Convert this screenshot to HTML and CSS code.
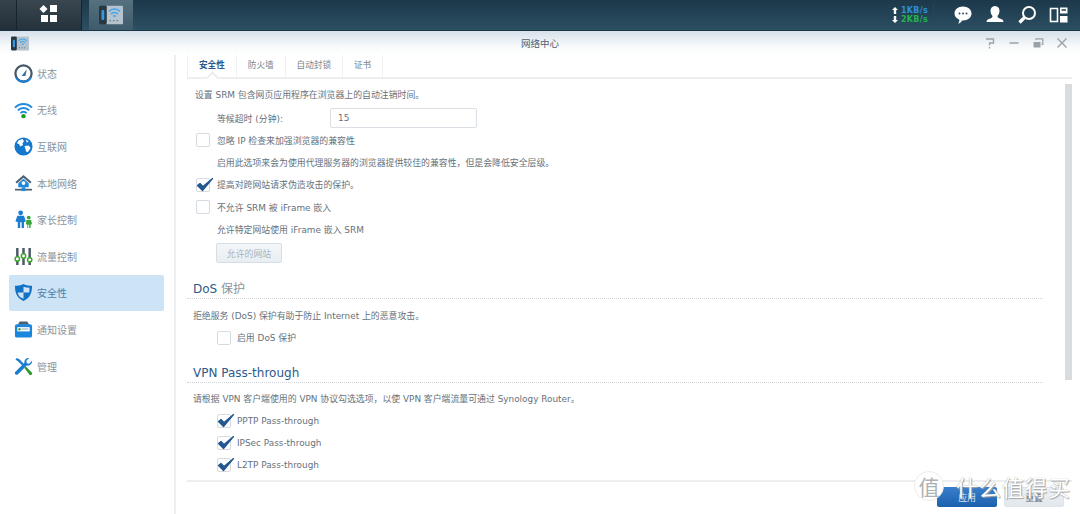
FILE: index.html
```html
<!DOCTYPE html>
<html lang="zh-CN">
<head>
    <meta charset="UTF-8">
    <meta name="viewport" content="width=device-width, initial-scale=1.0">
    <title>网络中心</title>
    <link rel="stylesheet" href="styles.css">
</head>
<body>
    <svg class="defs" width="0" height="0" aria-hidden="true">
        <symbol id="app" viewBox="0 0 34 28">
            <rect x="10" y="1" width="24" height="26" rx="1" fill="#b4c3cd"/>
            <rect x="0" y="1" width="11" height="26" rx="2" fill="#2a3640"/>
            <rect x="3.500" y="7" width="4" height="14" rx="1.500" fill="#2f9be8"/>
            <path d="M14 9a11 11 0 0 1 16 0M17 12.500a7 7 0 0 1 10 0M20 16a3 3 0 0 1 4 0" fill="none" stroke="#3ea6ee" stroke-width="2"/>
            <path d="M15 22h2M20 22h2M25 22h2" stroke="#5f7d92" stroke-width="2"/>
        </symbol>
        <symbol id="check" viewBox="0 0 18 16">
            <path d="M1.500 8.500l5 5L16.500 1.500 7 9.500 4 6.500z" fill="#23578f" stroke="#23578f" stroke-width="1.200" stroke-linejoin="round"/>
        </symbol>
    </svg>

    <header class="taskbar">
        <div class="start-edge"></div>
        <div class="start-btn">
            <svg width="20" height="18" viewBox="0 0 20 18">
                <path d="M4.500 0l4 4-4 4-4-4z M11 0h7v7h-7z M2 10h7v7H2z M11 10h7v7h-7z" fill="#fff"/>
            </svg>
        </div>
        <div class="task-app"><svg width="24" height="20"><use href="#app"/></svg></div>
        <div class="tray">
            <div class="speed">
                <div class="speed-row">
                    <svg width="6" height="7" viewBox="0 0 6 7"><path d="M3 0l3 3H4.200v4H1.800V3H0z" fill="#fff"/></svg>
                    <span class="up">1KB/s</span>
                </div>
                <div class="speed-row">
                    <svg width="6" height="7" viewBox="0 0 6 7"><path d="M3 7L0 4h1.800V0h2.400v4H6z" fill="#fff"/></svg>
                    <span class="down">2KB/s</span>
                </div>
            </div>
            <div class="tray-sep"></div>
            <svg class="tray-icon" width="20" height="20" viewBox="0 0 20 20">
                <path d="M10 1.500c5 0 8.500 3 8.500 7s-3.500 7-8.500 7h-1c-.5 1.500-2 3-4 3 1-1 1.500-2.500 1.300-3.800C3.500 13.500 1.500 11.300 1.500 8.500c0-4 3.500-7 8.500-7z" fill="#fff"/>
                <circle cx="6.500" cy="8.500" r="1" fill="#2c4f62"/><circle cx="10" cy="8.500" r="1" fill="#2c4f62"/><circle cx="13.500" cy="8.500" r="1" fill="#2c4f62"/>
            </svg>
            <svg class="tray-icon" width="20" height="20" viewBox="0 0 20 20">
                <path d="M10 1c3 0 4.500 2.200 4.500 5 0 2.200-1 4-2 5 0 1.500 1 2 3 2.700 1.700.6 3 1.300 3 3.300H1.500c0-2 1.300-2.700 3-3.300 2-.7 3-1.200 3-2.700-1-1-2-2.800-2-5 0-2.800 1.500-5 4.500-5z" fill="#fff"/>
            </svg>
            <svg class="tray-icon" width="20" height="20" viewBox="0 0 20 20">
                <circle cx="12" cy="8" r="6" fill="none" stroke="#fff" stroke-width="2"/>
                <path d="M7.500 12.500L2.500 17.500" stroke="#fff" stroke-width="3.200"/>
            </svg>
            <svg class="tray-icon" width="20" height="20" viewBox="0 0 20 20">
                <path d="M1.500 3.500h7v13h-7z" fill="none" stroke="#fff" stroke-width="1.600"/>
                <path d="M11 2.500h7.500v6H11z M11 11h7.500v6.500H11z" fill="#fff"/>
                <path d="M12.500 5h4.500" stroke="#2c4f62" stroke-width="1.600"/>
            </svg>
        </div>
    </header>

    <div class="window">
        <div class="titlebar">
            <svg class="title-app" width="18" height="15"><use href="#app"/></svg>
            <div class="title">网络中心</div>
            <div class="win-controls">
                <svg width="12" height="12" viewBox="0 0 12 12"><path d="M2 2h7.500v4H5.500v2.500M5.500 10v1.500" fill="none" stroke="#9aa2a8" stroke-width="1.300"/></svg>
                <svg width="12" height="12" viewBox="0 0 12 12"><path d="M1.500 6h9" stroke="#9aa2a8" stroke-width="1.500"/></svg>
                <svg width="12" height="12" viewBox="0 0 12 12"><path d="M1.500 5h7v5.500h-7z" fill="#9aa2a8"/><path d="M4 3V1.800h6.800v5.500H9.500" fill="none" stroke="#9aa2a8" stroke-width="1.200"/></svg>
                <svg width="12" height="12" viewBox="0 0 12 12"><path d="M1.500 1.500l9 9M10.500 1.500l-9 9" stroke="#9aa2a8" stroke-width="1.400"/></svg>
            </div>
        </div>

        <div class="window-body">
            <nav class="sidebar">
                <div class="nav-item">
                    <svg width="19" height="19" viewBox="0 0 20 20"><circle cx="10" cy="10" r="8.500" fill="#fff" stroke="#46586a" stroke-width="2.400"/><path d="M2.500 14.500a8.800 8.800 0 0 0 15 0" fill="none" stroke="#1d7fd1" stroke-width="2.400"/><path d="M8 12.500L13.500 5.500l-1.500 7z" fill="#2f6fa8"/></svg>
                    <span>状态</span>
                </div>
                <div class="nav-item">
                    <svg width="19" height="19" viewBox="0 0 20 20"><path d="M1 8a12.500 12.500 0 0 1 18 0M4 11a8.200 8.200 0 0 1 12 0M6.800 14a4 4 0 0 1 6.400 0" fill="none" stroke="#1f8ae0" stroke-width="2"/><circle cx="10" cy="17" r="2.300" fill="#1f9a2b"/></svg>
                    <span>无线</span>
                </div>
                <div class="nav-item">
                    <svg width="19" height="19" viewBox="0 0 20 20"><circle cx="10" cy="10" r="9.500" fill="#1478cf"/><path d="M5 3.500l4-1.500 1.500 2.500-1.500 2 .5 2-3 1.500-1-2.500-2.500-1zM11 9.500l4.500-.5 2 2.500-3 4.500-2-1-.5-3zM12.500 2.500l3 2-2 1.500z" fill="#fff"/></svg>
                    <span>互联网</span>
                </div>
                <div class="nav-item">
                    <svg width="19" height="19" viewBox="0 0 20 20"><path d="M10 1L1.500 8.500 3 10l7-6 7 6 1.500-1.500z" fill="#4d6070"/><path d="M10 5L4.500 9.700V14h11V9.700z" fill="#1f86d8"/><circle cx="10" cy="9.500" r="2" fill="#fff"/><path d="M1 16.500h18" stroke="#4d6070" stroke-width="1.800"/><path d="M8 14h4v4H8z" fill="#1f86d8"/></svg>
                    <span>本地网络</span>
                </div>
                <div class="nav-item">
                    <svg width="19" height="19" viewBox="0 0 20 20"><circle cx="7" cy="3" r="2.500" fill="#1b7cd0"/><path d="M3.500 6h7l2 6-2 .5V19H8v-6H6.500v6H4v-6.500L1.500 12z" fill="#1b7cd0"/><circle cx="15.500" cy="8" r="2" fill="#3aa53a"/><path d="M13 10.500h5l1 4.500-1.500.3V19h-1.500v-3.500h-1V19H14v-3.700l-1.500-.3z" fill="#3aa53a"/></svg>
                    <span>家长控制</span>
                </div>
                <div class="nav-item">
                    <svg width="19" height="19" viewBox="0 0 20 20"><path d="M3.500 1v18M10 1v18M16.500 1v18" stroke="#4d5a66" stroke-width="2.600"/><circle cx="3.500" cy="12.500" r="2.300" fill="#fff" stroke="#3fa52e" stroke-width="1.600"/><circle cx="10" cy="9.500" r="2.300" fill="#fff" stroke="#3fa52e" stroke-width="1.600"/><circle cx="16.500" cy="13.500" r="2.300" fill="#fff" stroke="#3fa52e" stroke-width="1.600"/></svg>
                    <span>流量控制</span>
                </div>
                <div class="nav-item active">
                    <svg width="19" height="19" viewBox="0 0 20 20"><path d="M10 1c3 1.500 6 2 9 2 0 8-2.500 13-9 16C3.500 16 1 11 1 3c3 0 6-.5 9-2z" fill="#1272c4"/><path d="M10 4v6H4c.4 3.500 2.500 5.500 6 6.500V10h6c.2-1.500.3-3 .3-5-2.300-.1-4.300-.4-6.300-1z" fill="#cfe4f7"/></svg>
                    <span>安全性</span>
                </div>
                <div class="nav-item">
                    <svg width="19" height="19" viewBox="0 0 20 20"><path d="M4 5l2-3.500h8L16 5z" fill="#4d6070"/><rect x="1" y="4.500" width="18" height="14" rx="2" fill="#1b86dc"/><rect x="3.500" y="7.500" width="13" height="4.500" fill="#fff"/><circle cx="5.800" cy="9.800" r="1.300" fill="#3aa53a"/><path d="M8 9.500h7" stroke="#8aa0b0"/></svg>
                    <span>通知设置</span>
                </div>
                <div class="nav-item">
                    <svg width="19" height="19" viewBox="0 0 20 20"><path d="M1.500 2.500l1.500-1.500 3 1.500 6 6.500-1.500 1.500-6.500-6z" fill="#1b7cd0"/><path d="M19 4l-3 3-2.500-.5L13 4l3-3c-3-.5-5.500 2-5 5L1.500 15.500c-.8 1-.8 2 0 2.700.8.8 1.800.8 2.700 0L13.500 9c3 .5 6-2 5.500-5z" fill="#1b7cd0"/><path d="M11 11.500l1.500-1.500 6.500 6.500c.5 1.500-1 3-2.500 2.500z" fill="#2e9a2e"/></svg>
                    <span>管理</span>
                </div>
            </nav>

            <main class="content">
                <div class="tabs">
                    <div class="tab current">安全性</div>
                    <div class="tab">防火墙</div>
                    <div class="tab">自动封锁</div>
                    <div class="tab">证书</div>
                </div>
                <div class="panel">
                    <div class="scroll-area">
                        <p class="row intro">设置 SRM 包含网页应用程序在浏览器上的自动注销时间。</p>
                        <div class="row indent field">
                            <label>等候超时 (分钟):</label>
                            <div class="input">15</div>
                        </div>
                        <div class="row check"><span class="box"></span>忽略 IP 检查来加强浏览器的兼容性</div>
                        <p class="row indent">启用此选项来会为使用代理服务器的浏览器提供较佳的兼容性，但是会降低安全层级。</p>
                        <div class="row check"><span class="box"><svg width="18" height="16"><use href="#check"/></svg></span>提高对跨网站请求伪造攻击的保护。</div>
                        <div class="row check"><span class="box"></span>不允许 SRM 被 iFrame 嵌入</div>
                        <p class="row indent">允许特定网站使用 iFrame 嵌入 SRM</p>
                        <div class="btn-row"><div class="btn-disabled">允许的网站</div></div>

                        <h2 class="section dos">DoS <span class="cn">保护</span></h2>
                        <p class="row">拒绝服务 (DoS) 保护有助于防止 Internet 上的恶意攻击。</p>
                        <div class="row check sub"><span class="box"></span>启用 DoS 保护</div>

                        <h2 class="section vpn">VPN Pass-through</h2>
                        <p class="row">请根据 VPN 客户端使用的 VPN 协议勾选选项，以使 VPN 客户端流量可通过 Synology Router。</p>
                        <div class="row check sub"><span class="box"><svg width="18" height="16"><use href="#check"/></svg></span>PPTP Pass-through</div>
                        <div class="row check sub"><span class="box"><svg width="18" height="16"><use href="#check"/></svg></span>IPSec Pass-through</div>
                        <div class="row check sub"><span class="box"><svg width="18" height="16"><use href="#check"/></svg></span>L2TP Pass-through</div>
                    </div>
                    <div class="scrollbar"><div class="thumb"></div></div>
                </div>
                <div class="footer">
                    <div class="btn-apply">应用</div>
                    <div class="btn-reset">重置</div>
                </div>
            </main>
        </div>
    </div>

    <!-- watermark over the bottom right corner -->
    <div class="watermark">
        <span class="wm-circle">值</span>
        <span class="wm-text">什么值得买</span>
    </div>
</body>
</html>
```

FILE: styles.css
```css
* {
    box-sizing: border-box;
}

html, body {
    height: 100%;
}

body {
    margin: 0;
    overflow: hidden;
    background-color: #fff;
    color: #66717b;
    font-family: "DejaVu Sans", "Noto Sans CJK SC", sans-serif;
    font-size: 8.9px;
}

.defs {
    position: absolute;
}

/* Top bar */
.taskbar {
    height: 31px;
    display: flex;
    align-items: stretch;
    background: linear-gradient(to bottom, #1c384a, #2c4f62);
    border-bottom: 1px solid #1d3646;
}

.start-edge {
    width: 17px;
    background: linear-gradient(to bottom, #36434d, #222f38);
    border-right: 1px solid #17242c;
}

.start-btn {
    width: 65px;
    display: flex;
    align-items: center;
    justify-content: center;
    padding-bottom: 3px;
    background: linear-gradient(to bottom, #3a4750, #24323b);
    border-right: 1px solid #17242c;
}

.task-app {
    width: 44px;
    margin-left: 7px;
    display: flex;
    align-items: center;
    justify-content: center;
    background: linear-gradient(to bottom, #56707f, #3e5b6b);
}

.tray {
    margin-left: auto;
    display: flex;
    align-items: center;
    padding-right: 5px;
}

.speed {
    width: 41px;
    font-size: 8px;
    line-height: 9.500px;
    font-weight: bold;
    letter-spacing: 0.3px;
}

.speed-row {
    display: flex;
    gap: 3px;
    align-items: center;
}

.up {
    color: #2f8fd6;
}

.down {
    color: #22b14c;
}

.tray-sep {
    width: 1px;
    height: 22px;
    margin-right: 13px;
    background-color: #264555;
}

.tray-icon {
    margin-left: 6px;
    margin-right: 6px;
}

/* Window */
.window {
    height: calc(100% - 31px);
    display: flex;
    flex-direction: column;
    background-color: #fff;
}

.titlebar {
    height: 24px;
    position: relative;
    display: flex;
    align-items: center;
    justify-content: center;
    background: linear-gradient(to bottom, #d5e0ea, #f6f8fa 60%, #fff);
}

.title-app {
    position: absolute;
    left: 11px;
    top: 5px;
}

.title {
    color: #50606e;
    font-size: 9.500px;
}

.win-controls {
    position: absolute;
    right: 12px;
    top: 6px;
    display: flex;
    gap: 12px;
}

.window-body {
    flex: 1;
    display: flex;
    min-height: 0;
}

.sidebar {
    width: 176px;
    padding: 0 10px 0 9px;
    border-right: 2px solid #eceef0;
}

.nav-item {
    height: 36.6px;
    display: flex;
    align-items: center;
    gap: 4px;
    padding-left: 5px;
    border-radius: 2px;
    color: #8a949c;
    font-size: 10px;
}

.nav-item svg {
    flex: none;
}

.nav-item.active {
    background-color: #cde3f6;
    color: #4f7ba6;
}

/* Content */
.content {
    flex: 1;
    min-width: 0;
    display: flex;
    flex-direction: column;
    margin-left: 11px;
    margin-right: 8px;
}

.tabs {
    height: 24px;
    display: flex;
    border-bottom: 2px solid #eceef0;
}

.tab {
    padding: 0 11px 4px;
    display: flex;
    align-items: center;
    border-right: 1px solid #eef0f2;
    color: #76828c;
    font-size: 8.6px;
}

.tab.current {
    position: relative;
    border-left: 1px solid #eef0f2;
    color: #2d5a8a;
    font-weight: bold;
}

.tab.current::after {
    content: "";
    position: absolute;
    left: 20px;
    bottom: -5px;
    width: 7px;
    height: 7px;
    background-color: #fff;
    border-right: 2px solid #eceef0;
    border-bottom: 2px solid #eceef0;
    transform: rotate(225deg);
}

.panel {
    flex: 1;
    display: flex;
    min-height: 0;
    border-bottom: 2px solid #eceef0;
}

.scroll-area {
    flex: 1;
    min-width: 0;
    padding-top: 4px;
    padding-right: 22px;
    overflow: hidden;
}

.scrollbar {
    width: 7px;
    padding-top: 5px;
}

.thumb {
    height: 296px;
    background-color: #d9dcdf;
}

.row {
    height: 22.2px;
    margin: 0;
    padding-left: 6px;
    display: flex;
    align-items: center;
    white-space: pre;
}

.intro {
    margin-bottom: 2px;
    padding-left: 8px;
}

.indent {
    padding-left: 30px;
}

.field label {
    width: 113px;
}

.input {
    width: 147px;
    height: 20px;
    padding-left: 7px;
    display: flex;
    align-items: center;
    border: 1px solid #d9dfe4;
    border-radius: 2px;
}

.check {
    padding-left: 9px;
    gap: 7px;
}

.check.sub {
    padding-left: 30px;
    gap: 6px;
}

.box {
    width: 14px;
    height: 14px;
    flex: none;
    position: relative;
    background-color: #fff;
    border: 1px solid #d5dbe0;
    border-radius: 2px;
}

.box svg {
    position: absolute;
    left: -1px;
    top: -2px;
}

.btn-row {
    padding-top: 3px;
    padding-left: 29px;
}

.btn-disabled {
    width: 66px;
    height: 20px;
    display: flex;
    align-items: center;
    justify-content: center;
    color: #a9b4bc;
    border: 1px solid #d5dee5;
    border-radius: 2px;
    background: linear-gradient(to bottom, #f4f7f9, #e8eef3);
}

.section {
    margin: 0 0 5px 0;
    padding: 0 0 1px 6px;
    border-bottom: 1px dotted #cfd4d8;
    color: #2d5a8a;
    font-size: 12px;
    font-weight: normal;
    line-height: 16px;
}

.section .cn {
    color: #8a949c;
}

.section.dos {
    margin-top: 18px;
}

.section.vpn {
    margin-top: 16px;
}

/* Bottom buttons */
.footer {
    height: 32px;
    flex: none;
    display: flex;
    justify-content: flex-end;
    align-items: flex-start;
    gap: 7px;
    padding: 5px 8px 0 0;
}

.btn-apply, .btn-reset {
    width: 60px;
    height: 20px;
    display: flex;
    align-items: center;
    justify-content: center;
    border-radius: 2px;
}

.btn-apply {
    color: #dbe9f7;
    background: linear-gradient(to bottom, #3a7fcb, #1c61ae);
}

.btn-reset {
    color: #5f6b75;
    border: 1px solid #dfe5ea;
    background: linear-gradient(to bottom, #eff3f6, #e1e7ec);
}

/* Watermark */
.watermark {
    position: absolute;
    right: 9px;
    bottom: 13px;
    display: flex;
    align-items: center;
    gap: 12px;
}

.wm-circle {
    width: 30px;
    height: 30px;
    display: flex;
    align-items: center;
    justify-content: center;
    border: 1px solid #ececec;
    border-radius: 50%;
    background-color: #fff;
    color: #aeb1b3;
    font-family: "Noto Sans CJK SC", sans-serif;
    font-size: 21px;
}

.wm-text {
    color: #fff;
    font-family: "Noto Sans CJK SC", sans-serif;
    font-size: 22px;
    line-height: 28px;
    letter-spacing: 1px;
    text-shadow: 0 0 1px #8f9397, 1px 1px 1px #a5a8ab;
}
```
